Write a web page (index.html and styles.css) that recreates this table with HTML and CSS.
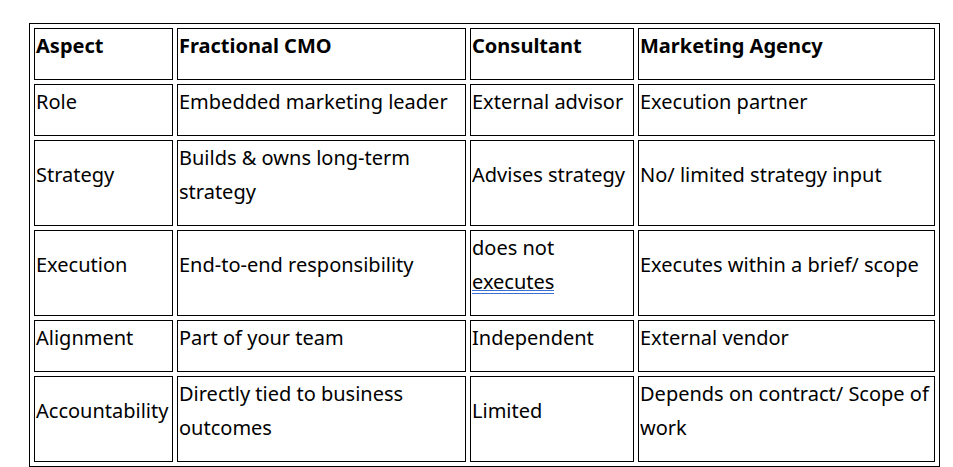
FILE: index.html
```html
<!DOCTYPE html>
<html>
<head>
<meta charset="utf-8">
<link rel="stylesheet" href="styles.css">
</head>
<body>
<table class="cmp">
  <colgroup>
    <col class="c1"><col class="c2"><col class="c3"><col class="c4">
  </colgroup>
  <tr class="head">
    <td>Aspect</td>
    <td>Fractional CMO</td>
    <td>Consultant</td>
    <td>Marketing Agency</td>
  </tr>
  <tr>
    <td>Role</td>
    <td>Embedded marketing leader</td>
    <td>External advisor</td>
    <td>Execution partner</td>
  </tr>
  <tr>
    <td>Strategy</td>
    <td>Builds &amp; owns long-term strategy</td>
    <td>Advises strategy</td>
    <td>No/ limited strategy input</td>
  </tr>
  <tr>
    <td>Execution</td>
    <td>End-to-end responsibility</td>
    <td>does not <span class="gram">executes</span></td>
    <td>Executes within a brief/ scope</td>
  </tr>
  <tr>
    <td>Alignment</td>
    <td>Part of your team</td>
    <td>Independent</td>
    <td>External vendor</td>
  </tr>
  <tr>
    <td>Accountability</td>
    <td>Directly tied to business outcomes</td>
    <td>Limited</td>
    <td>Depends on contract/ Scope of work</td>
  </tr>
</table>
</body>
</html>
```
FILE: styles.css
```css
html, body {
  margin: 0;
  padding: 0;
  background: #ffffff;
}

body {
  font-family: "Noto Sans", "Open Sans", sans-serif;
  font-size: 20px;
  color: #000000;
}

.cmp {
  margin: 23px 0 0 29px;
  border: 1px solid #000000;
  border-collapse: separate;
  border-spacing: 4px;
  table-layout: fixed;
  width: 911px;
  box-sizing: border-box;
}

.c1 { width: 139px; }
.c2 { width: 289px; }
.c3 { width: 164px; }
.c4 { width: 297px; }

.cmp td {
  border: 1px solid #000000;
  padding: 0 0 16px 1px;
  line-height: 34px;
  vertical-align: middle;
  text-align: left;
  box-sizing: border-box;
}

.head td {
  font-weight: 700;
}

.gram {
  background-image:
    linear-gradient(#3b6fd4, #3b6fd4),
    linear-gradient(#3b6fd4, #3b6fd4);
  background-repeat: no-repeat;
  background-size: 100% 1px, 100% 1px;
  background-position: 0 calc(100% - 4px), 0 calc(100% - 1px);
}
```
